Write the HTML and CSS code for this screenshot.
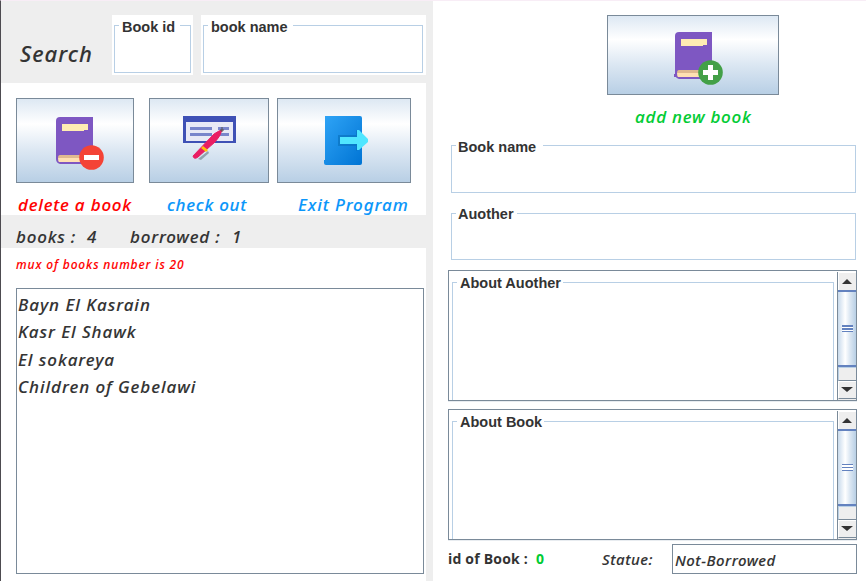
FILE: index.html
```html
<!DOCTYPE html>
<html lang="en">
<head>
<meta charset="utf-8">
<title>Library</title>
<link rel="stylesheet" href="styles.css">
</head>
<body>
<svg width="0" height="0" class="defs">
  <defs>
    <linearGradient id="door" x1="0" y1="0" x2="1" y2="1"><stop offset="0" stop-color="#2fa4f6"/><stop offset="1" stop-color="#0074d4"/></linearGradient>
    <symbol id="book" viewBox="0 0 50 54">
      <path d="M5 1H38V48H5Q1 47 1 43V5Q1 1 5 1Z" fill="#7e57c2"/>
      <path d="M7 8H33V14H29V15H7Z" fill="#ffecb3"/>
      <path d="M5 39H30V42H3Q3 39 5 39Z" fill="#e0b990"/>
      <path d="M3 42H30V46H4Q3 45 3 42Z" fill="#ffe0b2"/>
    </symbol>
  </defs>
</svg>
<div class="window">
  <section class="left">
    <div class="search">
      <span class="search-title t">Search</span>
      <div class="field id-field"><div class="frame"><span class="legend">Book id</span></div></div>
      <div class="field name-field"><div class="frame"><span class="legend">book name</span></div></div>
    </div>
    <div class="actions">
      <div class="action delete">
        <button><svg width="50" height="54"><use href="#book"/><circle cx="36.5" cy="41.5" r="12.3" fill="#f44336"/><rect x="29" y="39" width="15" height="5" fill="#fff"/></svg></button>
        <span class="t">delete a book</span>
      </div>
      <div class="action checkout">
        <button><svg width="56" height="54" viewBox="0 0 56 54">
          <path d="M1 2H54V29H1Z" fill="#3f51b5"/><path d="M4 8H51V27H4Z" fill="#e8eaf6"/>
          <path d="M8 13H30V16H8ZM8 19H30V22H8ZM36 13H47V16H36ZM36 19H47V22H36Z" fill="#7986cb"/>
          <path d="M16 45L26 37L27 39L19 46Z" fill="#90a4ae"/>
          <path d="M11 42L32 20Q38 16 40 16Q38 23 33 28L16 43Q12 46 11 42Z" fill="#e91e63" stroke="#e91e63"/>
          <path d="M21 32L26 36L24 38L19 34Z" fill="#ffc107"/><path d="M40 13V18M38 16H42" stroke="#555"/>
        </svg></button>
        <span class="t">check out</span>
      </div>
      <div class="action exit">
        <button><svg width="50" height="54" viewBox="0 0 50 54">
          <path d="M6 3H41Q43 3 43 5V50Q43 52 41 52H7Q5 52 5 50V47H6Z" fill="url(#door)"/>
          <path d="M19 22H37V17L43 21V34L37 38V33H19Z" fill="#0872bd" opacity=".65"/>
          <path d="M21 24H38V17H40L49 26V29L40 37H38V31H21Z" fill="#50e6ff"/>
        </svg></button>
        <span class="t">Exit Program</span>
      </div>
    </div>
    <div class="stats"><span class="t s1">books :</span><span class="t s2">4</span><span class="t s3">borrowed :</span><span class="t s4">1</span></div>
    <p class="limit t">mux of books number is 20</p>
    <ul class="list t"><li>Bayn El Kasrain</li><li>Kasr El Shawk</li><li>El sokareya</li><li>Children of Gebelawi</li></ul>
  </section>
  <section class="right">
    <button class="add"><svg width="50" height="54"><use href="#book"/><path d="M0 43H3V46H0Z" fill="#7e57c2"/><circle cx="36.5" cy="41.5" r="12.3" fill="#43a047"/><path d="M34 34H39V39H44V44H39V49H34V44H29V39H34Z" fill="#fff"/></svg></button>
    <span class="add-label t">add new book</span>
    <div class="frame wide"><span class="legend wide-gap">Book name</span></div>
    <div class="frame wide second"><span class="legend">Auother</span></div>
    <div class="area">
      <div class="frame open"><span class="legend">About Auother</span></div>
      <div class="bar"><i class="arrow up"></i><i class="thumb"></i><i class="track"></i><i class="arrow down"></i></div>
    </div>
    <div class="area about-book">
      <div class="frame open"><span class="legend">About Book</span></div>
      <div class="bar"><i class="arrow up"></i><i class="thumb"></i><i class="track"></i><i class="arrow down"></i></div>
    </div>
    <div class="footer"><span class="idlabel">id of Book :</span><span class="idvalue">0</span><span class="status t">Statue:</span><div class="statusbox t">Not-Borrowed</div></div>
  </section>
</div>
</body>
</html>
```
FILE: styles.css
```css
* { box-sizing: border-box; }
body { margin: 0; background: #fff; overflow: hidden; }
.defs { position: absolute; }
.window { display: flex; width: 866px; height: 581px; border-left: 1px solid #4d4b50; border-top: 1px solid #f8edf6; }
.t { font-family: "Noto Sans", sans-serif; font-style: italic; font-weight: 500; color: #333; white-space: nowrap; -webkit-text-stroke: .1px currentColor; }
.left { width: 432px; background: #fff; border-right: 7px solid #eee; }
.search { display: flex; align-items: flex-start; height: 82px; width: 432px; background: #eee; padding: 14px 0 0 19px; border-right: 7px solid #eee; }
.search-title { width: 92px; font-size: 22px; line-height: 30px; letter-spacing: 1px; padding-top: 23px; }
.field { height: 60px; background: #fff; padding: 10px 3px 2px 2px; }
.id-field { width: 81px; padding-right: 2px; }
.name-field { width: 225px; margin-left: 8px; }
.frame { position: relative; height: 48px; border: 1px solid #b8cfe5; }
.legend { position: absolute; left: 4px; top: -10px; padding: 0 5px 0 4px; background: #fff; font: bold 14.5px/20px "Liberation Sans", sans-serif; letter-spacing: 0; color: #333; white-space: nowrap; }
.id-field .legend, .name-field .legend { top: -9px; padding-left: 3px; }
.actions { display: flex; height: 132px; padding: 15px 0 0 15px; }
button { display: flex; align-items: center; justify-content: center; padding: 0; border: 1px solid #7a8a99; background: linear-gradient(#dde8f3 0%, #fff 30%, #dde8f3 61%, #b8cfe5 100%); }
.action { display: flex; flex-direction: column; font-size: 17px; }
.action button { width: 100%; height: 85px; flex: none; }
.action .t { line-height: 24px; margin-top: 10px; color: #0a96fa; letter-spacing: .9px; }
.delete { width: 118px; }
.action.delete .t { color: red; padding-left: 2px; letter-spacing: .8px; }
.delete svg { margin: 4px 0 0 10px; }
.checkout { width: 120px; margin-left: 15px; }
.action.checkout .t { padding-left: 18px; letter-spacing: .75px; }
.checkout svg { margin-top: 0; margin-left: 2px; }
.exit { width: 134px; margin-left: 8px; }
.exit .t { padding-left: 21px; }
.exit svg { margin: 0 0 2px 0; }
.stats { display: flex; height: 33px; background: #eee; padding: 10px 0 0 15px; font-size: 17px; line-height: 24px; letter-spacing: .8px; }
.s1 { width: 71px; }
.s2 { width: 43px; }
.s3 { width: 102px; }
.limit { margin: 0; height: 40px; padding: 8px 0 0 15px; font-size: 12px; line-height: 18px; color: red; letter-spacing: .87px; }
.list { list-style: none; margin: 0 0 0 15px; padding: 2px 0 0 1px; width: 408px; height: 286px; border: 1px solid #7a8a99; font-size: 17px; letter-spacing: .95px; }
.list li { height: 27.4px; line-height: 27.4px; }
.right { width: 433px; display: flex; flex-direction: column; align-items: flex-start; padding: 14px 0 0 15px; }
.add { width: 172px; height: 80px; margin-left: 159px; }
.add svg { margin: 6px 0 0 12px; }
.add-label { margin: 10px 0 0 187px; height: 26px; line-height: 24px; font-size: 17px; letter-spacing: .75px; color: #00cc33; }
.wide { width: 405px; margin: 14px 0 0 3px; flex: none; }
.wide.second { margin-top: 20px; height: 47px; }
.wide .legend { left: 4px; padding: 0 3px 0 2px; top: -9px; }
.wide.second .legend { top: -10px; }
.wide .wide-gap { padding-right: 7px; }
.area { display: flex; width: 409px; height: 131px; margin-top: 10px; border: 1px solid #7a8a99; box-shadow: 0 1px #e8ecf0; }
.area.about-book { margin-top: 8px; }
.open { width: 382px; height: 118px; margin: 11px 3px 0 3px; border-bottom: 0; }
.open .legend { left: 4px; padding: 0 2px 0 3px; }
.bar { width: 19px; flex: none; margin-top: 1px; height: 128px; border-left: 1px solid #7a8a99; display: flex; flex-direction: column; background: #eee; }
.arrow { height: 18px; display: flex; align-items: center; justify-content: center; border-left: 1px solid #fff; border-top: 1px solid #fff; flex: none; }
.arrow::before { content: ""; border: 5px solid transparent; border-top: 0; border-bottom: 5px solid #333; margin: 0 1px 1px 0; }
.down::before { border-bottom: 0; border-top: 5px solid #333; border-left-width: 6px; border-right-width: 6px; }
.thumb { height: 77px; flex: none; border-top: 2px solid #6382bf; border-bottom: 2px solid #6382bf; background: linear-gradient(90deg, #c8daec, #fff 40%, #dde8f3 65%, #b8cfe5); display: flex; align-items: center; justify-content: center; }
.thumb::before { content: ""; width: 11px; height: 7px; margin-bottom: 1px; background: repeating-linear-gradient(#6382bf 0 1.5px, #fff 1.5px 3px); }
.track { height: 14px; flex: none; border-left: 1px solid #b8cfe5; border-top: 1px solid #b8cfe5; border-bottom: 1px solid #7a8a99; }
.down { border-bottom: 1px solid #7a8a99; }
.footer { display: flex; width: 409px; height: 30px; margin-top: 4px; align-items: flex-start; }
.idlabel, .idvalue { font: bold 14px/20px "Open Sans", sans-serif; color: #333; padding-top: 5px; white-space: nowrap; letter-spacing: .2px; }
.idlabel { width: 88px; }
.idvalue { width: 66px; color: #00cc33; }
.status { width: 70px; font-size: 15px; line-height: 20px; padding-top: 5px; letter-spacing: .5px; }
.statusbox { width: 185px; height: 30px; border: 1px solid #7a8a99; font-size: 15px; line-height: 30px; padding-left: 2px; letter-spacing: .5px; }
```
